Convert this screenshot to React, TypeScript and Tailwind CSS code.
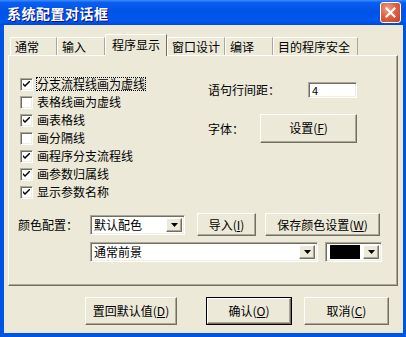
import React from "react";

const raised =
  "border border-t-white border-l-white border-r-[#716f64] border-b-[#716f64] shadow-[inset_-1px_-1px_0_#aca899] bg-[#ece9d8]";
const sunken =
  "border border-t-[#aca899] border-l-[#aca899] border-r-white border-b-white shadow-[inset_1px_1px_0_#716f64,inset_-1px_-1px_0_#f1efe2] bg-white";

function Check({ on }: { on: boolean }) {
  return (
    <span className={`w-[13px] h-[13px] flex items-center justify-center shrink-0 ${sunken}`}>
      {on && (
        <svg width="7" height="7" viewBox="0 0 7 7">
          <path d="M0 2 L0 4 L2 6 L7 1 L7 -1 L2 4 Z" fill="#000" />
        </svg>
      )}
    </span>
  );
}

function Arrow() {
  return (
    <span className={`w-[16px] h-full flex items-center justify-center shrink-0 ${raised}`}>
      <svg width="7" height="4" viewBox="0 0 7 4">
        <path d="M0 0 H7 L3.5 4 Z" fill="#000" />
      </svg>
    </span>
  );
}

const tabs = [
  { label: "通常", w: "w-[47px]" },
  { label: "输入", w: "w-[48px]" },
  { label: "程序显示", w: "w-[62px]", active: true },
  { label: "窗口设计", w: "w-[58px]" },
  { label: "编译", w: "w-[48px]" },
  { label: "目的程序安全", w: "w-[85px]" },
];

const checks = [
  { label: "分支流程线画为虚线", on: true, focus: true },
  { label: "表格线画为虚线", on: false },
  { label: "画表格线", on: true },
  { label: "画分隔线", on: false },
  { label: "画程序分支流程线", on: true },
  { label: "画参数归属线", on: true },
  { label: "显示参数名称", on: true },
];

export default function App() {
  return (
    <div className="w-[406px] h-[337px] flex flex-col bg-[#0054e3] font-['Noto_Sans_CJK_SC','Noto_Sans',sans-serif] text-[12px] leading-[14px] text-black overflow-hidden">
      {/* title bar */}
      <div className="h-[25px] shrink-0 flex items-center justify-between pl-[7px] pr-[5px] bg-[linear-gradient(to_bottom,#3d8fff_0%,#0a5ef0_10%,#0053e6_45%,#0058ee_85%,#0048d8_100%)]">
        <span className="text-white font-bold text-[14px] leading-[16px] tracking-[0.5px] [text-shadow:1px_1px_0_#0f1089]">
          系统配置对话框
        </span>
        <span className="w-[21px] h-[21px] rounded-[3px] border border-white flex items-center justify-center bg-[radial-gradient(circle_at_35%_30%,#f0a08a_0%,#e2603f_45%,#c8401f_100%)]">
          <svg width="11" height="11" viewBox="0 0 11 11">
            <path d="M1.5 1.5 L9.5 9.5 M9.5 1.5 L1.5 9.5" stroke="#fff" strokeWidth="2.2" strokeLinecap="square" />
          </svg>
        </span>
      </div>

      {/* body */}
      <div className="flex-1 ml-[4px] mr-[3px] mb-[4px] bg-[#ece9d8] flex flex-col pl-[4px] pt-[10px]">
        {/* tabs */}
        <div className="h-[20px] flex items-end pl-[2px] relative z-10">
          {tabs.map((t) =>
            t.active ? (
              <div
                key={t.label}
                className={`${t.w} h-[22px] -mb-px bg-[#ece9d8] border-t border-l border-t-white border-l-white border-r border-r-[#716f64] flex items-center justify-center pb-[2px] rounded-tl-[2px]`}
              >
                {t.label}
              </div>
            ) : (
              <div
                key={t.label}
                className={`${t.w} h-[18px] border-t border-l border-t-white border-l-white border-r border-r-[#aca899] flex items-center pl-[4px] rounded-tl-[2px]`}
              >
                {t.label}
              </div>
            )
          )}
        </div>

        {/* panel */}
        <div className="w-[390px] h-[231px] border border-t-white border-l-white border-r-[#716f64] border-b-[#716f64] shadow-[inset_-1px_-1px_0_#aca899] flex flex-col">
          <div className="flex">
            <div className="w-[199px] pl-[11px] pt-[19px] flex flex-col">
              {checks.map((c) => (
                <div key={c.label} className="h-[18px] flex items-center">
                  <Check on={c.on} />
                  <span
                    className={`ml-[3px] px-[1px] ${c.focus ? "outline outline-1 outline-dotted outline-black -outline-offset-1" : ""}`}
                  >
                    {c.label}
                  </span>
                </div>
              ))}
            </div>
            <div className="flex-1 pt-[26px] flex flex-col">
              <div className="h-[16px] flex items-center">
                <span className="w-[100px]">语句行间距：</span>
                <div className={`w-[49px] h-[16px] flex items-center pl-[3px] text-[11px] ${sunken}`}>4</div>
              </div>
              <div className="mt-[16px] h-[29px] flex items-center">
                <span className="w-[52px]">字体：</span>
                <div className={`w-[97px] h-[29px] flex items-center justify-center pb-[2px] ${raised}`}>
                  设置(<u>F</u>)
                </div>
              </div>
            </div>
          </div>

          <div className="mt-[12px] pl-[9px] flex items-center h-[23px]">
            <span className="w-[72px]">颜色配置：</span>
            <div className={`w-[95px] h-[20px] flex items-center ${sunken} p-[2px]`}>
              <span className="flex-1 pl-[1px]">默认配色</span>
              <Arrow />
            </div>
            <div className={`ml-[12px] w-[59px] h-[23px] flex items-center justify-center ${raised}`}>
              导入(<u>I</u>)
            </div>
            <div className={`ml-[9px] w-[115px] h-[23px] flex items-center justify-center ${raised}`}>
              保存颜色设置(<u>W</u>)
            </div>
          </div>

          <div className="mt-[6px] pl-[81px] flex items-center">
            <div className={`w-[228px] h-[20px] flex items-center ${sunken} p-[2px]`}>
              <span className="flex-1 pl-[1px]">通常前景</span>
              <Arrow />
            </div>
            <div className={`ml-[7px] w-[57px] h-[20px] flex items-center ${sunken} p-[2px]`}>
              <span className="flex-1 h-full bg-black mr-[3px] ml-[2px]" />
              <Arrow />
            </div>
          </div>
        </div>

        {/* buttons */}
        <div className="mt-[11px] flex pl-[77px]">
          <div className={`w-[92px] h-[28px] flex items-center justify-center ${raised}`}>
            置回默认值(<u>D</u>)
          </div>
          <div className="ml-[29px] w-[86px] h-[28px] border border-black">
            <div className={`w-full h-full flex items-center justify-center ${raised}`}>
              确认(<u>O</u>)
            </div>
          </div>
          <div className={`ml-[12px] w-[85px] h-[28px] flex items-center justify-center ${raised}`}>
            取消(<u>C</u>)
          </div>
        </div>
      </div>
    </div>
  );
}
